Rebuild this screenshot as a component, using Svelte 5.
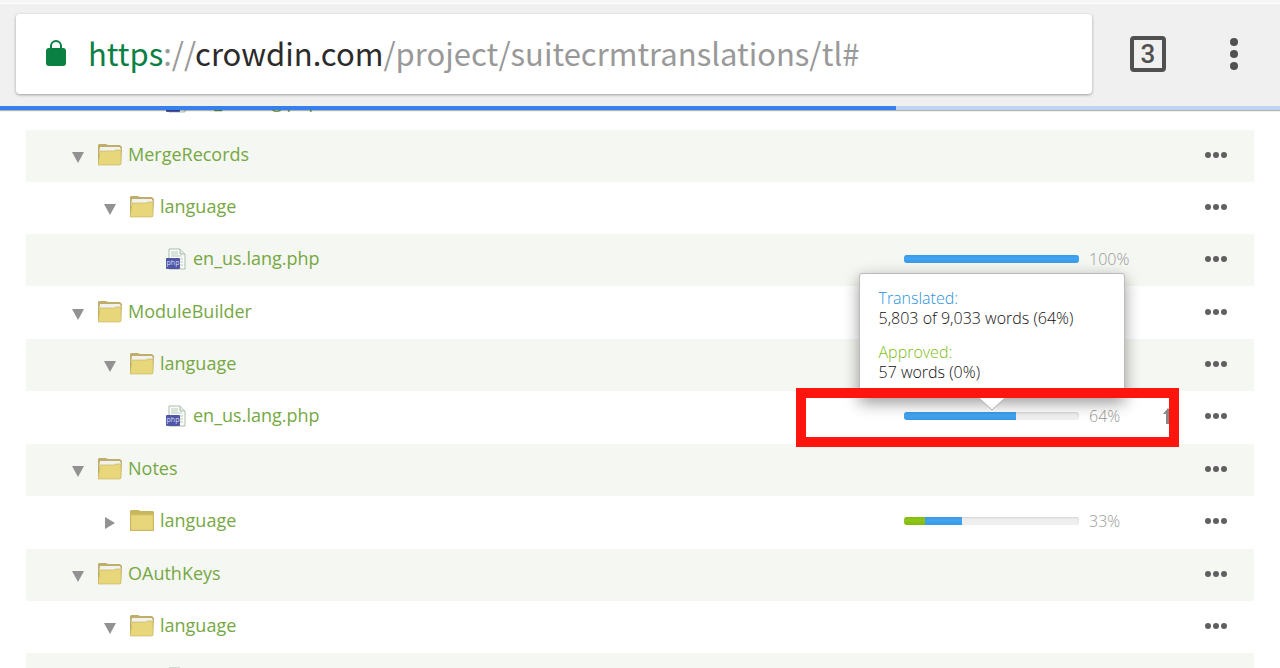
<script lang="ts">
  type Row = {
    name: string;
    level: number;
    kind: "open" | "closed" | "file";
    progress?: { translated: number; approved: number };
    details?: boolean;
  };

  const rows: Row[] = [
    { name: "en_us.lang.php", level: 2, kind: "file" },
    { name: "MergeRecords", level: 0, kind: "open" },
    { name: "language", level: 1, kind: "open" },
    {
      name: "en_us.lang.php",
      level: 2,
      kind: "file",
      progress: { translated: 100, approved: 0 }
    },
    { name: "ModuleBuilder", level: 0, kind: "open" },
    { name: "language", level: 1, kind: "open" },
    {
      name: "en_us.lang.php",
      level: 2,
      kind: "file",
      progress: { translated: 64, approved: 0 },
      details: true
    },
    { name: "Notes", level: 0, kind: "open" },
    {
      name: "language",
      level: 1,
      kind: "closed",
      progress: { translated: 33, approved: 12 }
    },
    { name: "OAuthKeys", level: 0, kind: "open" },
    { name: "language", level: 1, kind: "open" },
    { name: "en_us.lang.php", level: 2, kind: "file" }
  ];

  const pageLoad = 70;
</script>

<div class="browser">
  <header>
    <div class="toolbar">
      <div class="address">
        <svg class="lock" viewBox="0 0 20 26" aria-hidden="true">
          <path
            d="M5 9V6a5 5 0 0 1 10 0v3"
            fill="none"
            stroke="#0b8043"
            stroke-width="2"
          />
          <rect y="8" width="20" height="18" rx="3" fill="#0b8043" />
        </svg>
        <div
          class="url"
          role="textbox"
          aria-label="Address"
          contenteditable="true"
          spellcheck="false"
        ><span class="scheme">https</span>://<span class="host">crowdin.com</span>/project/suitecrmtranslations/tl#</div>
      </div>
      <button class="tabs" aria-label="Open tabs">3</button>
      <button class="more" aria-label="Browser menu">
        <svg viewBox="0 0 8 32">
          <circle cx="4" cy="4" r="4" />
          <circle cx="4" cy="16" r="4" />
          <circle cx="4" cy="28" r="4" />
        </svg>
      </button>
    </div>
    <div class="loading" role="progressbar" aria-valuenow={pageLoad}>
      <div style:width="{pageLoad}%"></div>
    </div>
  </header>

  <main>
    <table>
      <tbody>
        {#each rows as row}
          <tr class:group={row.level === 0}>
            <td>
              <div class="name level-{row.level}">
                {#if row.kind === "file"}
                  <span class="toggle"></span>
                  <svg class="icon" viewBox="0 0 24 22" aria-hidden="true">
                    <path
                      d="M6 1h11l5 5v15H6z"
                      fill="#fbfdfa"
                      stroke="#a9bcae"
                    />
                    <path d="M17 1v5h5" fill="#e3ebe4" stroke="#a9bcae" />
                    <path
                      d="M8 4h7M8 6h7M8 8h11M17 11h3M17 14h3M17 17h3"
                      stroke="#b9c9bd"
                    />
                    <rect
                      x="3"
                      y="10"
                      width="14"
                      height="11"
                      rx="1"
                      fill="#4f56a6"
                    />
                    <text x="10" y="17" text-anchor="middle">php</text>
                  </svg>
                {:else}
                  <button
                    class="toggle"
                    aria-label="Toggle {row.name}"
                    aria-expanded={row.kind === "open"}
                  >
                    <svg viewBox="0 0 12 12">
                      {#if row.kind === "open"}
                        <path d="M0 1h12L6 12z" />
                      {:else}
                        <path d="M1 0v12l10-6z" />
                      {/if}
                    </svg>
                  </button>
                  <svg class="icon" viewBox="0 0 24 22" aria-hidden="true">
                    {#if row.kind === "open"}
                      <path d="M0 21V1l1-1h7l2 1h12l2 2-1 17-1 1z" fill="#bfae6a" />
                      <path d="M2 3h20l1 3v4H1z" fill="#f1f1ee" />
                      <path
                        d="M2 7h14l2-1h5v14l-1 1H0z"
                        fill="#e8d67b"
                        stroke="#c4b15f"
                        stroke-width="0.6"
                      />
                    {:else}
                      <path d="M0 21V1l1-1h8l1 1h13l1 1v19z" fill="#c9b75e" />
                      <path
                        d="M1 5h22v15H1z"
                        fill="#e8d67b"
                        stroke="#d3c069"
                        stroke-width="0.6"
                      />
                    {/if}
                  </svg>
                {/if}
                <a href="#{row.name}">{row.name}</a>
              </div>
            </td>
            <td class="status">
              {#if row.progress}
                <div class="progress">
                  <div class="bar">
                    <div class="track">
                      <div
                        class="approved"
                        style:width="{row.progress.approved}%"
                      ></div>
                      <div
                        class="translated"
                        style:width="{row.progress.translated -
                          row.progress.approved}%"
                      ></div>
                    </div>
                    {#if row.details}
                      <div class="popup" role="tooltip">
                        <p>
                          <span class="blue">Translated:</span><br />
                          5,803 of 9,033 words (64%)
                        </p>
                        <p>
                          <span class="green">Approved:</span><br />
                          57 words (0%)
                        </p>
                        <svg class="tip" viewBox="0 0 28 14">
                          <path d="M0 0l14 13L28 0" />
                        </svg>
                      </div>
                    {/if}
                  </div>
                  <span>{row.progress.translated}%</span>
                </div>
              {/if}
            </td>
            <td class="priority">
              {#if row.details}
                <svg viewBox="0 0 10 16" aria-label="High priority">
                  <path d="M5 0l5 6H7v10H3V6H0z" />
                </svg>
              {/if}
            </td>
            <td class="actions">
              <button aria-label="Actions for {row.name}">
                <svg viewBox="0 0 22 6">
                  <circle cx="3" cy="3" r="3" />
                  <circle cx="11" cy="3" r="3" />
                  <circle cx="19" cy="3" r="3" />
                </svg>
              </button>
              {#if row.details}
                <div class="highlight"></div>
              {/if}
            </td>
          </tr>
        {/each}
      </tbody>
    </table>
  </main>
</div>

<style>
  :global(body) {
    margin: 0;
    background: #fff;
    font-family: "Open Sans", "Noto Sans", sans-serif;
  }

  button {
    display: grid;
    place-items: center;
    padding: 0;
    border: 0;
    background: none;
    cursor: pointer;
  }

  svg {
    display: block;
  }

  .browser {
    display: flex;
    flex-direction: column;
    height: 100vh;
  }

  header {
    position: relative;
    z-index: 5;
    border-top: 3px solid #f6f6f6;
    background: #f0f0f0;
    box-shadow: 0 1px 1px #0000004d;
  }

  .toolbar {
    display: flex;
    align-items: center;
    padding: 10px 28px 12px 16px;
    border-top: 1px solid #fff;
  }

  .address {
    flex: 1;
    display: flex;
    align-items: center;
    gap: 22px;
    box-sizing: border-box;
    height: 80px;
    margin-right: 38px;
    padding: 0 30px 2px;
    border-radius: 4px;
    background: #fff;
    box-shadow: 0 1px 3px #00000059;
  }

  .lock {
    width: 20px;
    height: 26px;
  }

  .url {
    flex: 1;
    overflow: hidden;
    outline: 0;
    color: #999;
    font: 31px/48px "Noto Sans CJK SC", "Noto Sans", sans-serif;
    white-space: nowrap;
  }

  .scheme {
    color: #0b8043;
  }

  .host {
    color: #2b2b2b;
  }

  .tabs {
    width: 36px;
    height: 36px;
    margin-right: 50px;
    border: 4px solid #505050;
    border-radius: 4px;
    color: #505050;
    font: 500 26px/28px Roboto, sans-serif;
  }

  .more {
    width: 36px;
    height: 36px;
  }

  .more svg {
    width: 8px;
    height: 32px;
    fill: #505050;
  }

  .loading {
    height: 4px;
    background: #bfd4f1;
  }

  .loading div {
    height: 100%;
    background: #3480ee;
  }

  main {
    flex: 1;
    min-height: 0;
    overflow: hidden;
    padding: 0 26px;
  }

  /* the list is scrolled a little under the toolbar */
  table {
    width: 100%;
    margin-top: -33px;
    border-spacing: 0;
    table-layout: fixed;
  }

  tr {
    position: relative;
  }

  td {
    box-sizing: border-box;
    height: 52px;
    padding: 0 0 2px;
  }

  tr:nth-child(even) td {
    background: #f5f7f2;
    background-clip: padding-box;
  }

  .group td {
    height: 53px;
    border-top: 1px solid transparent;
  }

  .name {
    display: flex;
    align-items: center;
    padding-left: 46px;
  }

  .level-1 {
    padding-left: 78px;
  }

  .level-2 {
    padding-left: 111px;
  }

  .toggle {
    width: 12px;
    height: 12px;
    margin-top: 4px;
    margin-right: 14px;
  }

  .toggle svg {
    width: 12px;
    height: 12px;
    fill: #929292;
  }

  .icon {
    width: 24px;
    height: 22px;
    margin-right: 6px;
  }

  .icon text {
    fill: #d9dbf2;
    font-size: 7px;
  }

  a {
    padding-bottom: 2px;
    color: #76a843;
    font-size: 18px;
    line-height: 24px;
    text-decoration: none;
  }

  .status {
    width: 254px;
  }

  .progress {
    display: flex;
    align-items: center;
    gap: 10px;
    color: #999;
    font-size: 16px;
    font-weight: 300;
    line-height: 20px;
  }

  .bar {
    position: relative;
    width: 175px;
  }

  .track {
    display: flex;
    overflow: hidden;
    height: 8px;
    border-radius: 3px;
    background: #efefef;
    box-shadow: inset 0 1px 2px #0000001f;
  }

  .translated {
    background: linear-gradient(#3b98e4, #42a5f2 40%, #3b98e4);
  }

  .approved {
    background: linear-gradient(#84bb10, #8ec718 40%, #82b80f);
  }

  .popup {
    position: absolute;
    z-index: 2;
    bottom: calc(100% + 14px);
    left: 50%;
    box-sizing: border-box;
    width: 266px;
    padding: 14px 19px 15px;
    transform: translateX(-50%);
    border: 1px solid #bbb;
    border-radius: 3px;
    background: #fff;
    box-shadow: 0 5px 16px #00000066;
    color: #111;
    font-size: 16px;
    line-height: 20px;
  }

  .popup p {
    margin: 0;
  }

  .popup p + p {
    margin-top: 14px;
  }

  .blue {
    color: #2a92e0;
  }

  .green {
    color: #80bd14;
  }

  .tip {
    position: absolute;
    top: 100%;
    left: 50%;
    width: 28px;
    height: 14px;
    transform: translateX(-50%);
    fill: #fff;
    stroke: #aaa;
  }

  .priority {
    width: 20px;
  }

  .priority svg {
    width: 10px;
    height: 16px;
    margin: 0 auto;
    fill: #888;
  }

  .actions {
    width: 76px;
  }

  .actions button {
    width: 44px;
    height: 30px;
    margin: 0 auto;
  }

  .actions svg {
    width: 22px;
    height: 6px;
    fill: #606060;
  }

  .highlight {
    position: absolute;
    z-index: 3;
    top: -3px;
    right: 75px;
    bottom: -4px;
    box-sizing: border-box;
    width: 383px;
    border: 10px solid #fd150e;
    pointer-events: none;
  }
</style>
